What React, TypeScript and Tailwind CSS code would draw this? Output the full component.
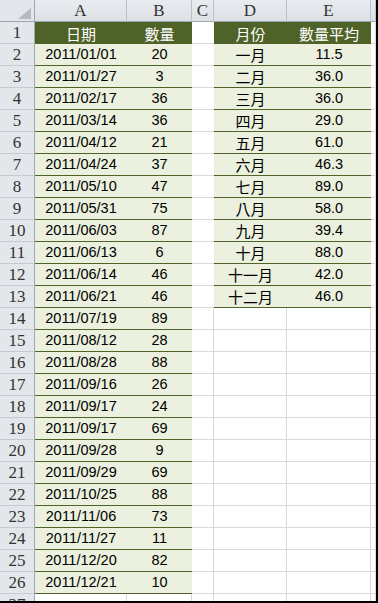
import React from 'react';

const olive = 'bg-[#4f6228]';

const sales: [string, string][] = [
  ['2011/01/01', '20'],
  ['2011/01/27', '3'],
  ['2011/02/17', '36'],
  ['2011/03/14', '36'],
  ['2011/04/12', '21'],
  ['2011/04/24', '37'],
  ['2011/05/10', '47'],
  ['2011/05/31', '75'],
  ['2011/06/03', '87'],
  ['2011/06/13', '6'],
  ['2011/06/14', '46'],
  ['2011/06/21', '46'],
  ['2011/07/19', '89'],
  ['2011/08/12', '28'],
  ['2011/08/28', '88'],
  ['2011/09/16', '26'],
  ['2011/09/17', '24'],
  ['2011/09/17', '69'],
  ['2011/09/28', '9'],
  ['2011/09/29', '69'],
  ['2011/10/25', '88'],
  ['2011/11/06', '73'],
  ['2011/11/27', '11'],
  ['2011/12/20', '82'],
  ['2011/12/21', '10'],
];

const monthly: [string, string][] = [
  ['一月', '11.5'],
  ['二月', '36.0'],
  ['三月', '36.0'],
  ['四月', '29.0'],
  ['五月', '61.0'],
  ['六月', '46.3'],
  ['七月', '89.0'],
  ['八月', '58.0'],
  ['九月', '39.4'],
  ['十月', '88.0'],
  ['十一月', '42.0'],
  ['十二月', '46.0'],
];

const latin = "font-['Liberation_Sans','Noto_Sans_CJK_TC',sans-serif] text-[14.5px]";
const cjk = "font-['Noto_Sans_CJK_TC','Liberation_Sans',sans-serif] text-[15px]";
const headFont = "font-['Liberation_Serif','Noto_Sans_CJK_TC',serif] text-[17px] text-[#333]";

const Empty: React.FC<{ noRight?: boolean }> = ({ noRight }) => (
  <div className={`h-[22px] bg-white border-b border-[#d9d9d9] ${noRight ? '' : 'border-r'}`} />
);

const TitleCell: React.FC<{ text: string }> = ({ text }) => (
  <div className={`h-[22px] ${olive} text-white flex items-center justify-center leading-none ${cjk}`}>
    {text}
  </div>
);

const DataCell: React.FC<{ text: string; zh?: boolean }> = ({ text, zh }) => (
  <div
    className={`h-[22px] bg-[#ebf1de] border-b border-[#4f6228] text-black flex items-center justify-center leading-none ${
      zh ? cjk : latin
    }`}
  >
    {text}
  </div>
);

const App: React.FC = () => {
  const rows = Array.from({ length: 27 }, (_, i) => i + 1);

  return (
    <div className="w-[378px] h-[603px] overflow-hidden bg-white border-r-2 border-b-2 border-black">
      <div className="grid grid-cols-[35px_92px_65px_22px_73px_84px_5px]">
        {/* column headings */}
        <div className="h-[22px] bg-[#e3e6ea] border-r border-b border-[#9ea6b0] flex items-end justify-end pr-[3px] pb-[2px]">
          <svg width="13" height="11" viewBox="0 0 13 11">
            <polygon points="0,11 13,0 13,11" fill="#b4bbc4" />
          </svg>
        </div>
        {['A', 'B', 'C', 'D', 'E', ''].map((c, i) => (
          <div
            key={i}
            className={`h-[22px] bg-gradient-to-b from-[#e8ebef] to-[#dde1e6] border-b border-[#9ea6b0] border-r border-r-[#bcc2ca] flex items-center justify-center leading-none ${headFont}`}
          >
            {c}
          </div>
        ))}

        {rows.map((r) => {
          const s = sales[r - 2];
          const m = monthly[r - 2];
          return (
            <React.Fragment key={r}>
              <div
                className={`h-[22px] bg-[#e3e6ea] border-r border-[#9ea6b0] border-b border-b-[#c5cbd3] flex items-center justify-center leading-none ${headFont}`}
              >
                {r}
              </div>

              {r === 1 ? (
                <>
                  <TitleCell text="日期" />
                  <TitleCell text="數量" />
                </>
              ) : s ? (
                <>
                  <DataCell text={s[0]} />
                  <DataCell text={s[1]} />
                </>
              ) : (
                <>
                  <Empty />
                  <Empty />
                </>
              )}

              <Empty noRight={r <= 13} />

              {r === 1 ? (
                <>
                  <TitleCell text="月份" />
                  <TitleCell text="數量平均" />
                </>
              ) : m ? (
                <>
                  <DataCell text={m[0]} zh />
                  <DataCell text={m[1]} />
                </>
              ) : (
                <>
                  <Empty />
                  <Empty />
                </>
              )}

              <Empty />
            </React.Fragment>
          );
        })}
      </div>
    </div>
  );
};

export default App;
